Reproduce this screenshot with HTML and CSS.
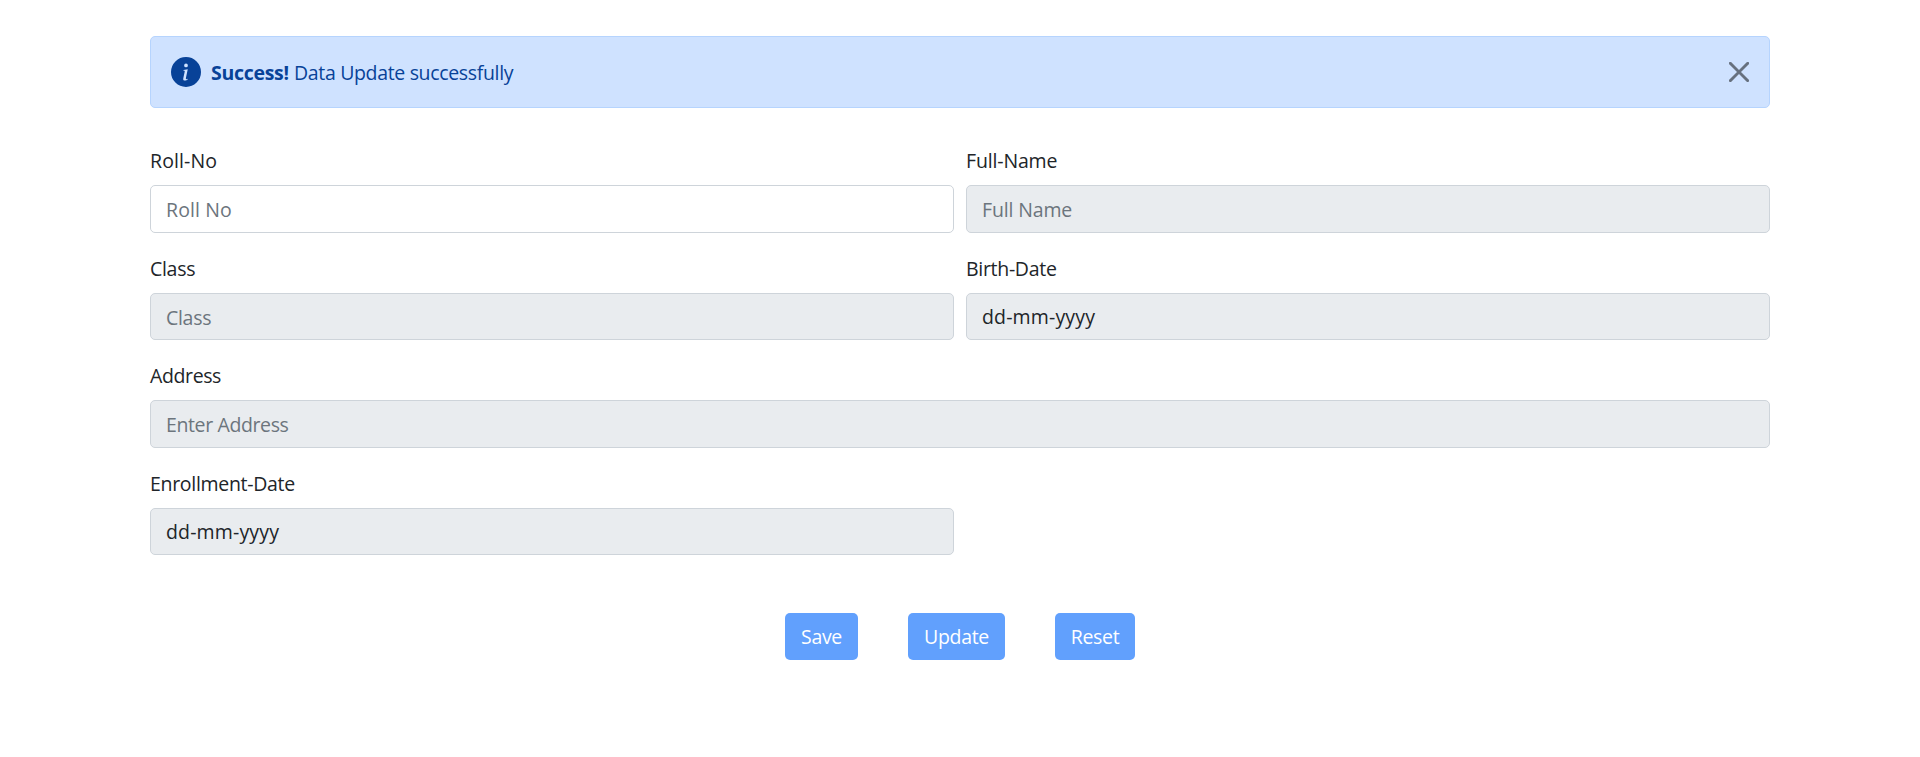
FILE: index.html
```html
<!DOCTYPE html>
<html lang="en">
<head>
<meta charset="utf-8">
<title>Student Enrollment</title>
<link rel="stylesheet" href="styles.css">
</head>
<body>
<main class="container">
  <div class="alert" role="alert">
    <svg class="alert-icon" viewBox="0 0 16 16" fill="currentColor" aria-hidden="true"><path d="M8 16A8 8 0 1 0 8 0a8 8 0 0 0 0 16zm.93-9.412-1 4.705c-.07.34.029.533.304.533.194 0 .487-.07.686-.246l-.088.416c-.287.346-.92.598-1.465.598-.703 0-1.002-.422-.808-1.319l.738-3.468c.064-.293.006-.399-.287-.47l-.451-.081.082-.381 2.29-.287zM8 5.5a1 1 0 1 1 0-2 1 1 0 0 1 0 2z"/></svg>
    <strong class="alert-title">Success!</strong>
    <span class="alert-text">Data Update successfully</span>
    <button class="alert-close" type="button" aria-label="Close"><svg viewBox="0 0 16 16" fill="currentColor"><path d="M.293.293a1 1 0 0 1 1.414 0L8 6.586 14.293.293a1 1 0 1 1 1.414 1.414L9.414 8l6.293 6.293a1 1 0 0 1-1.414 1.414L8 9.414l-6.293 6.293a1 1 0 0 1-1.414-1.414L6.586 8 .293 1.707a1 1 0 0 1 0-1.414z"/></svg></button>
  </div>
  <form class="form">
    <div class="field roll"><label for="roll">Roll-No</label><input id="roll" placeholder="Roll No"></div>
    <div class="field name"><label for="name">Full-Name</label><input id="name" placeholder="Full Name" disabled></div>
    <div class="field"><label for="class">Class</label><input id="class" placeholder="Class" disabled></div>
    <div class="field"><label for="birth">Birth-Date</label><input class="date" id="birth" value="dd-mm-yyyy" disabled></div>
    <div class="field wide"><label for="address">Address</label><input id="address" placeholder="Enter Address" disabled></div>
    <div class="field"><label for="enroll">Enrollment-Date</label><input class="date" id="enroll" value="dd-mm-yyyy" disabled></div>
  </form>
  <div class="actions">
    <button class="btn save" type="button" disabled>Save</button>
    <button class="btn update" type="button" disabled>Update</button>
    <button class="btn reset" type="button" disabled>Reset</button>
  </div>
</main>
</body>
</html>
```
FILE: styles.css
```css
* { box-sizing: border-box; }
body {
  margin: 0;
  background: #fff;
  color: #212529;
  font: 19.5px/30px "Open Sans", "Noto Sans", sans-serif;
  letter-spacing: -0.3px;
}
.container { width: 1620px; margin: 0 auto; padding-top: 36px; }
.alert {
  display: flex;
  align-items: center;
  height: 72px;
  padding: 0 20px;
  border: 1px solid #b6d4fe;
  border-radius: 5px;
  background: #cfe2ff;
  color: #084298;
}
.alert-icon { width: 30px; height: 30px; margin-right: 10px; }
.alert-title { width: 83px; padding-top: 2px; font-weight: 700; letter-spacing: -0.3px; }
.alert-text { padding-top: 2px; letter-spacing: -0.34px; }
.alert-close {
  display: flex;
  margin-left: auto;
  padding: 0;
  border: 0;
  background: none;
  color: #000;
  opacity: .5;
}
.alert-close svg { width: 20px; height: 20px; stroke: currentColor; stroke-width: .3px; }
.form {
  display: grid;
  grid-template-columns: 1fr 1fr;
  gap: 20px 12px;
  margin-top: 37px;
}
.wide { grid-column: 1 / -1; letter-spacing: -0.38px; }
.roll { letter-spacing: 0.1px; }
.name { letter-spacing: -0.15px; }
.field label { display: block; padding-top: 1px; margin-bottom: 9px; }
.field input {
  display: block;
  width: 100%;
  height: 47.5px;
  padding: 2px 15px 0;
  border: 1px solid #ced4da;
  border-radius: 5px;
  background: #fff;
  color: #212529;
  font: inherit;
  letter-spacing: inherit;
}
.field input:disabled { background: #e9ecef; }
.field input.date { padding-top: 0; letter-spacing: 0.15px; }
.field input::placeholder { color: #6c757d; opacity: 1; }
.actions {
  display: flex;
  justify-content: center;
  gap: 50px;
  margin-top: 58px;
}
.btn {
  height: 47px;
  padding: 0;
  border: 0;
  border-radius: 5px;
  background: #0d6efd;
  color: #fff;
  font: inherit;
  letter-spacing: inherit;
  opacity: .65;
}
.save { width: 73px; }
.update { width: 97px; }
.reset { width: 80px; }
```
